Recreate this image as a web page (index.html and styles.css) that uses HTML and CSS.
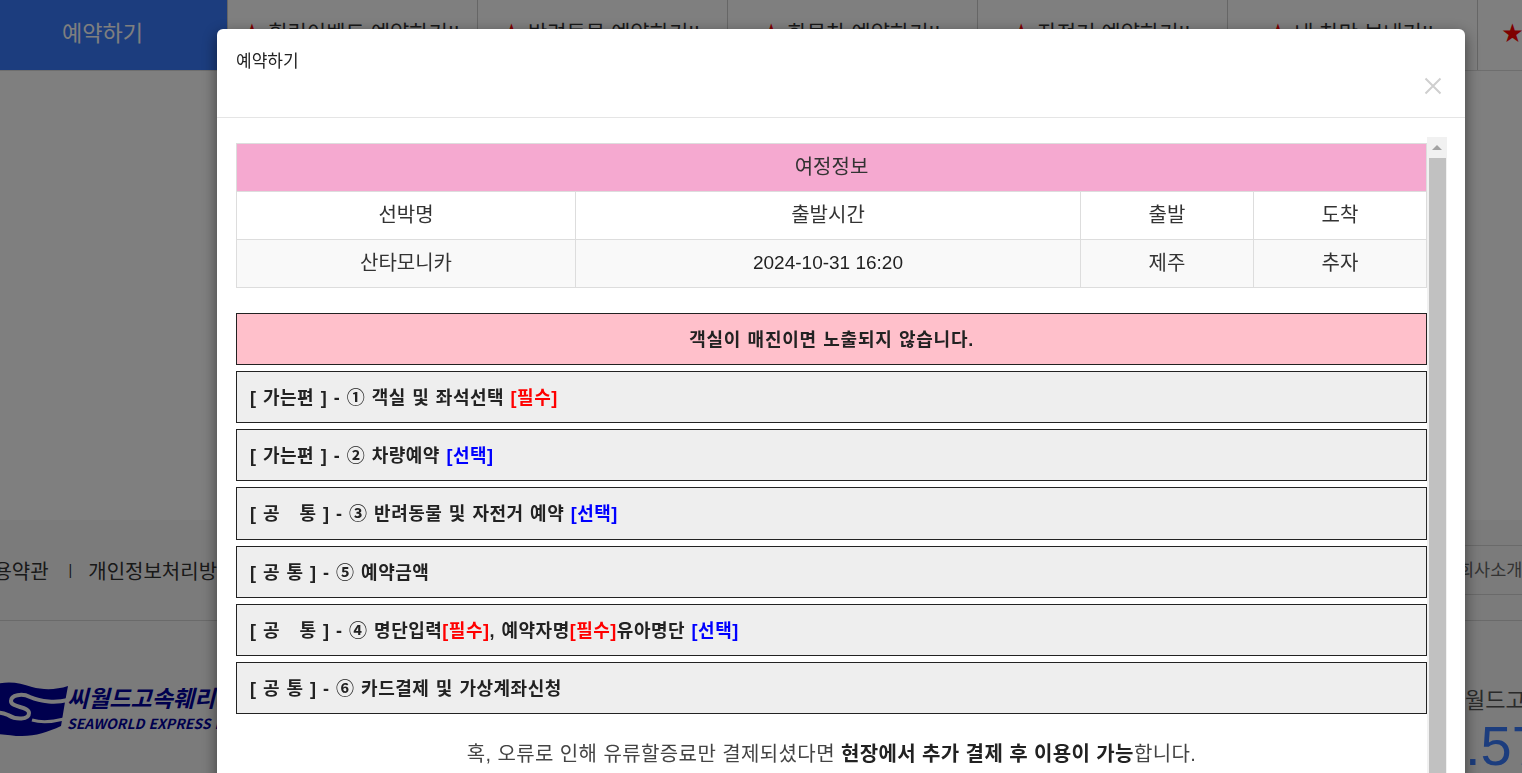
FILE: index.html
```html
<!DOCTYPE html>
<html lang="ko">
<head>
    <meta charset="UTF-8">
    <title>예약하기</title>
    <link rel="stylesheet" href="styles.css">
</head>
<body>
    <nav class="top-nav">
        <a class="nav-main">예약하기</a>
        <a class="nav-item"><span class="star">★</span> 힐링이벤트 예약하기!!</a>
        <a class="nav-item"><span class="star">★</span> 반려동물 예약하기!!</a>
        <a class="nav-item"><span class="star">★</span> 화물차 예약하기!!</a>
        <a class="nav-item"><span class="star">★</span> 자전거 예약하기!!</a>
        <a class="nav-item"><span class="star">★</span> 내 차만 보내기!!</a>
        <a class="nav-item nav-last"><span class="star">★</span></a>
    </nav>

    <main class="page-main"></main>

    <footer class="site-footer">
        <div class="footer-nav">
            <div class="footer-links">
                <span>이용약관</span>
                <span class="footer-sep">|</span>
                <span>개인정보처리방침</span>
            </div>
            <div class="family-site">회사소개</div>
        </div>
        <div class="footer-info">
            <div class="logo">
                <svg class="logo-mark" viewBox="0 0 72 54" width="72" height="54">
                    <path d="M0 2 C14 -1 24 1 36 5 C47 8 60 8 72 4 L69 20 L65 44 C52 50 40 54 26 54 C16 54 8 52 0 52 Z" fill="#00009c"/>
                    <path d="M72 18 C60 21 45 20 34 15 C26 11 15 13 15 19 C15 26 33 24 33 31 C33 38 20 38 12 33 C8 31 4 30 0 31" fill="none" stroke="#f7f7f7" stroke-width="4"/>
                    <path d="M36 38 C46 41 56 40 68 37" fill="none" stroke="#f7f7f7" stroke-width="3"/>
                </svg>
                <div class="logo-text">
                    <div class="logo-ko">씨월드고속훼리㈜</div>
                    <div class="logo-en">SEAWORLD EXPRESS FERRY</div>
                </div>
            </div>
            <div class="contact">
                <div class="contact-name">월드고속훼리</div>
                <div class="contact-tel">.5711</div>
            </div>
        </div>
    </footer>

    <div class="backdrop"></div>

    <div class="modal">
        <div class="modal-header">
            <h4 class="modal-title">예약하기</h4>
            <svg class="modal-close" viewBox="0 0 18 18" width="18" height="18">
                <path d="M1.5 1.5 L16.5 16.5 M16.5 1.5 L1.5 16.5" stroke="#cfcfcf" stroke-width="2" fill="none"/>
            </svg>
        </div>
        <div class="modal-body">
            <div class="scroll-content">
                <table class="trip-table">
                    <colgroup>
                        <col class="col-ship">
                        <col class="col-time">
                        <col class="col-port">
                        <col class="col-port">
                    </colgroup>
                    <tr class="trip-head"><th colspan="4">여정정보</th></tr>
                    <tr><td>선박명</td><td>출발시간</td><td>출발</td><td>도착</td></tr>
                    <tr class="trip-row"><td>산타모니카</td><td class="trip-date">2024-10-31 16:20</td><td>제주</td><td>추자</td></tr>
                </table>

                <div class="step-list">
                    <div class="step step-notice">객실이 매진이면 노출되지 않습니다.</div>
                    <div class="step">[ 가는편 ] - ① 객실 및 좌석선택 <span class="req">[필수]</span></div>
                    <div class="step">[ 가는편 ] - ② 차량예약 <span class="opt">[선택]</span></div>
                    <div class="step">[ 공 &nbsp; 통 ] - ③ 반려동물 및 자전거 예약 <span class="opt">[선택]</span></div>
                    <div class="step">[ 공 통 ] - ⑤ 예약금액</div>
                    <div class="step">[ 공 &nbsp; 통 ] - ④ 명단입력<span class="req">[필수]</span>, 예약자명<span class="req">[필수]</span>유아명단 <span class="opt">[선택]</span></div>
                    <div class="step">[ 공 통 ] - ⑥ 카드결제 및 가상계좌신청</div>
                </div>

                <p class="pay-note">혹, 오류로 인해 유류할증료만 결제되셨다면 <b>현장에서 추가 결제 후 이용이 가능</b>합니다.</p>
            </div>
            <div class="scrollbar">
                <div class="scroll-up"></div>
                <div class="scroll-thumb"></div>
            </div>
        </div>
    </div>
</body>
</html>
```

FILE: styles.css
```css
html, body {
    height: 100%;
}

body {
    margin: 0;
    overflow: hidden;
    background: #fff;
    color: #333;
    font-family: "Liberation Sans", "Noto Sans CJK KR", sans-serif;
}

/* top nav */
.top-nav {
    display: flex;
    height: 71px;
    border-bottom: 1px solid #ddd;
    box-sizing: border-box;
}

.nav-main {
    flex: 0 0 227px;
    box-sizing: border-box;
    padding-right: 22px;
    background: #387afc;
    color: #fff;
    font-size: 22px;
    line-height: 68px;
    text-align: center;
}

.nav-item {
    flex: 0 0 250px;
    box-sizing: border-box;
    padding-right: 4px;
    border-left: 1px solid #ccc;
    font-size: 21px;
    line-height: 66px;
    text-align: center;
    white-space: nowrap;
}

.nav-last {
    flex: 0 0 60px;
    text-align: left;
    padding-left: 24px;
}

.star {
    color: #f00;
}

.page-main {
    height: 449px;
}

/* footer */
.site-footer {
    background: #f7f7f7;
    height: 253px;
}

.footer-nav {
    display: flex;
    justify-content: space-between;
    align-items: center;
    height: 101px;
    box-sizing: border-box;
    border-bottom: 1px solid #d4d4d4;
}

.footer-links {
    display: flex;
    align-items: center;
    margin-left: -25px;
    font-size: 20px;
    color: #333;
}

.footer-sep {
    margin: 0 16px 0 20px;
    font-size: 14px;
}

.family-site {
    width: 160px;
    height: 50px;
    box-sizing: border-box;
    padding-left: 36px;
    margin-right: -60px;
    border-top: 1px solid #d4d4d4;
    border-bottom: 1px solid #d4d4d4;
    font-size: 17.5px;
    line-height: 48px;
    color: #666;
    white-space: nowrap;
}

.footer-info {
    display: flex;
    justify-content: space-between;
    padding-top: 61px;
}

.logo {
    display: flex;
    margin-left: -4px;
    white-space: nowrap;
}

.logo-text {
    margin-left: -1px;
    color: #00009c;
    font-family: "Noto Sans CJK KR", sans-serif;
    font-style: italic;
    font-weight: 700;
}

.logo-ko {
    font-size: 23px;
    line-height: 31px;
}

.logo-en {
    font-size: 14px;
    line-height: 20px;
}

.contact {
    width: 57px;
    white-space: nowrap;
    overflow: hidden;
    margin-top: 5px;
}

.contact-name {
    font-size: 22px;
    line-height: 28px;
    color: #555;
}

.contact-tel {
    font-size: 56px;
    line-height: 62px;
    color: #387afc;
}

/* modal */
.backdrop {
    position: fixed;
    inset: 0;
    background: rgba(0, 0, 0, .5);
}

.modal {
    position: fixed;
    top: 29px;
    left: 217px;
    width: 1248px;
    height: 800px;
    background: #fff;
    border-radius: 6px;
    box-shadow: 0 5px 15px rgba(0, 0, 0, .5);
}

.modal-header {
    display: flex;
    justify-content: space-between;
    box-sizing: border-box;
    height: 89px;
    padding: 22px 23px 0 19px;
    border-bottom: 1px solid #e5e5e5;
}

.modal-title {
    margin: 0;
    font-size: 17px;
    font-weight: 400;
    line-height: 22px;
    color: #222;
}

.modal-close {
    margin-top: 26px;
}

.modal-body {
    display: flex;
    padding: 19px 18px 0 19px;
}

.scroll-content {
    width: 1191px;
    padding-top: 6px;
}

.trip-table {
    width: 100%;
    border-collapse: collapse;
    table-layout: fixed;
    font-size: 20px;
    text-align: center;
}

.col-ship { width: 339px; }
.col-time { width: 505px; }
.col-port { width: 173px; }

.trip-table th,
.trip-table td {
    height: 48px;
    padding: 0 0 4px;
    box-sizing: border-box;
    border: 1px solid #ddd;
    font-weight: 400;
}

.trip-table .trip-date {
    font-size: 19px;
    color: #222;
    padding-bottom: 1px;
}

.trip-head th {
    background: #f5a9d0;
}

.trip-row td {
    background: #f9f9f9;
}

.step-list {
    display: flex;
    flex-direction: column;
    gap: 6px;
    margin-top: 25px;
}

.step {
    box-sizing: border-box;
    height: 52.15px;
    padding-left: 13px;
    border: 1px solid #222;
    background: #eee;
    font-size: 18px;
    font-weight: 700;
    line-height: 52px;
    letter-spacing: .5px;
    word-spacing: 1px;
    color: #222;
}

.step-notice {
    padding-left: 0;
    background: #ffc0cb;
    text-align: center;
    letter-spacing: .7px;
}

.req {
    color: #f00;
}

.opt {
    color: #00f;
}

.pay-note {
    margin: 25px 0 0;
    font-size: 20px;
    line-height: 30px;
    letter-spacing: .4px;
    text-align: center;
    color: #444;
}

.pay-note b {
    color: #222;
}

/* drawn scrollbar */
.scrollbar {
    width: 20px;
    height: 640px;
    background: #f1f1f1;
}

.scroll-up {
    width: 0;
    height: 0;
    margin: 8px auto 0;
    border-left: 5px solid transparent;
    border-right: 5px solid transparent;
    border-bottom: 5px solid #a3a3a3;
}

.scroll-thumb {
    height: 620px;
    margin: 8px 1px 0 2px;
    background: #c1c1c1;
}
```
